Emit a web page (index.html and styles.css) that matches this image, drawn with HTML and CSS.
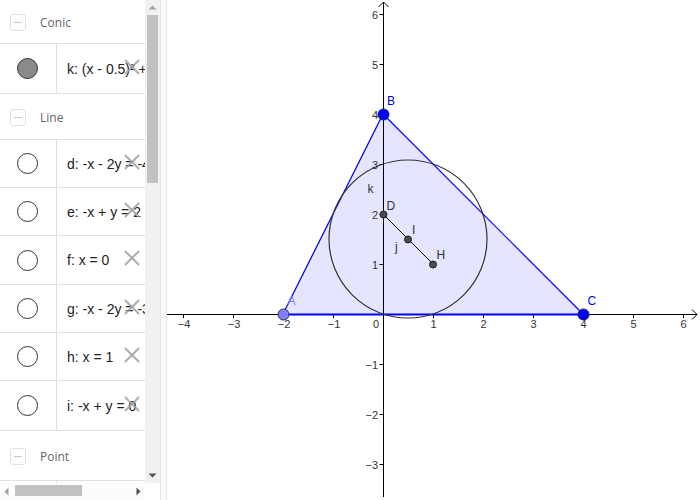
FILE: index.html
```html
<!DOCTYPE html>
<html>
<head>
<meta charset="utf-8">
<link rel="stylesheet" href="styles.css">
</head>
<body>
<div class="app">
  <div class="algebra">
    <div class="av-main">
      <div class="av-list">
        <div class="group h44"><span class="collapse"></span><span class="gname">Conic</span></div>
        <div class="item h50"><div class="marble-cell"><span class="marble filled"></span></div><div class="formula">k: (x - 0.5)² + (y - 1.5)² = 2.5</div><span class="del"></span></div>
        <div class="group h46"><span class="collapse"></span><span class="gname">Line</span></div>
        <div class="item h48"><div class="marble-cell"><span class="marble"></span></div><div class="formula">d: -x - 2y = -4</div><span class="del"></span></div>
        <div class="item h48"><div class="marble-cell"><span class="marble"></span></div><div class="formula">e: -x + y = 2</div><span class="del"></span></div>
        <div class="item h49"><div class="marble-cell"><span class="marble"></span></div><div class="formula">f: x = 0</div><span class="del"></span></div>
        <div class="item h48"><div class="marble-cell"><span class="marble"></span></div><div class="formula">g: -x - 2y = -3</div><span class="del"></span></div>
        <div class="item h48"><div class="marble-cell"><span class="marble"></span></div><div class="formula">h: x = 1</div><span class="del"></span></div>
        <div class="item h50"><div class="marble-cell"><span class="marble"></span></div><div class="formula">i: -x + y = 0</div><span class="del"></span></div>
        <div class="group h50"><span class="collapse"></span><span class="gname">Point</span></div>
        <div class="item h48"><div class="marble-cell"></div><div class="formula"></div></div>
      </div>
      <div class="vscroll">
        <div class="arrow-btn"><svg width="15" height="15" viewBox="0 0 15 15"><polygon points="3.5,9.5 11.5,9.5 7.5,5.5" fill="#a3a3a3"/></svg></div>
        <div class="vtrack"><div class="vthumb"></div></div>
        <div class="arrow-btn"><svg width="15" height="15" viewBox="0 0 15 15"><polygon points="3.5,5.5 11.5,5.5 7.5,9.5" fill="#505050"/></svg></div>
      </div>
    </div>
    <div class="hscroll-row">
      <div class="hscroll">
        <div class="harrow"><svg width="12" height="15" viewBox="0 0 12 15"><polygon points="8.5,3.5 8.5,11.5 4.5,7.5" fill="#a3a3a3"/></svg></div>
        <div class="htrack"><div class="hthumb"></div></div>
        <div class="harrow"><svg width="12" height="15" viewBox="0 0 12 15"><polygon points="3.5,3.5 3.5,11.5 7.5,7.5" fill="#505050"/></svg></div>
      </div>
      <div class="corner"></div>
    </div>
  </div>
  <div class="splitter"></div>
  <div class="graphics">
    <svg class="canvas" width="533" height="500" viewBox="167 0 533 500">
      <polygon points="283,314 383,114 583,314" fill="#e5e5ff"/>
      <line x1="167" y1="314.5" x2="697" y2="314.5" stroke="#000" stroke-width="1"/>
      <line x1="383.5" y1="2" x2="383.5" y2="497" stroke="#000" stroke-width="1"/>
      <polyline points="692,309.5 697,314.5 692,319.5" fill="none" stroke="#000" stroke-width="1"/>
      <polyline points="378.5,7 383.5,2 388.5,7" fill="none" stroke="#000" stroke-width="1"/>
      <g stroke="#000" stroke-width="1">
        <line x1="183.5" y1="314" x2="183.5" y2="318"/>
        <line x1="233.5" y1="314" x2="233.5" y2="318"/>
        <line x1="283.5" y1="314" x2="283.5" y2="318"/>
        <line x1="333.5" y1="314" x2="333.5" y2="318"/>
        <line x1="433.5" y1="314" x2="433.5" y2="318"/>
        <line x1="483.5" y1="314" x2="483.5" y2="318"/>
        <line x1="533.5" y1="314" x2="533.5" y2="318"/>
        <line x1="583.5" y1="314" x2="583.5" y2="318"/>
        <line x1="633.5" y1="314" x2="633.5" y2="318"/>
        <line x1="683.5" y1="314" x2="683.5" y2="318"/>
        <line x1="379.5" y1="14.5" x2="383" y2="14.5"/>
        <line x1="379.5" y1="64.5" x2="383" y2="64.5"/>
        <line x1="379.5" y1="114.5" x2="383" y2="114.5"/>
        <line x1="379.5" y1="164.5" x2="383" y2="164.5"/>
        <line x1="379.5" y1="214.5" x2="383" y2="214.5"/>
        <line x1="379.5" y1="264.5" x2="383" y2="264.5"/>
        <line x1="379.5" y1="364.5" x2="383" y2="364.5"/>
        <line x1="379.5" y1="414.5" x2="383" y2="414.5"/>
        <line x1="379.5" y1="464.5" x2="383" y2="464.5"/>
      </g>
      <g class="ticklbl" text-anchor="middle">
        <text x="184" y="328">−4</text>
        <text x="234" y="328">−3</text>
        <text x="284" y="328">−2</text>
        <text x="334" y="328">−1</text>
        <text x="433.5" y="328">1</text>
        <text x="483.5" y="328">2</text>
        <text x="533.5" y="328">3</text>
        <text x="583.5" y="328">4</text>
        <text x="633.5" y="328">5</text>
        <text x="683.5" y="328">6</text>
      </g>
      <g class="ticklbl" text-anchor="end">
        <text x="379" y="328">0</text>
        <text x="378" y="18.5">6</text>
        <text x="378" y="68.5">5</text>
        <text x="378" y="118.5">4</text>
        <text x="378" y="168.5">3</text>
        <text x="378" y="218.5">2</text>
        <text x="378" y="268.5">1</text>
        <text x="378" y="368.5">−1</text>
        <text x="378" y="418.5">−2</text>
        <text x="378" y="468.5">−3</text>
      </g>
      <line x1="283" y1="314" x2="383" y2="114" stroke="#0000ff" stroke-width="1.2"/>
      <line x1="383" y1="114" x2="583" y2="314" stroke="#0000ff" stroke-width="1.2"/>
      <line x1="283" y1="314.5" x2="583" y2="314.5" stroke="#0000ff" stroke-width="2"/>
      <circle cx="408" cy="239" r="79" fill="none" stroke="#333" stroke-width="1.2"/>
      <line x1="383" y1="214" x2="433" y2="264" stroke="#000" stroke-width="1"/>
      <circle cx="383.5" cy="214.5" r="3.5" fill="#4d4d4d" stroke="#222" stroke-width="1"/>
      <circle cx="408" cy="239.5" r="3.5" fill="#4d4d4d" stroke="#222" stroke-width="1"/>
      <circle cx="433" cy="264.5" r="3.5" fill="#4d4d4d" stroke="#222" stroke-width="1"/>
      <circle cx="283.5" cy="314.5" r="5.5" fill="#7f7fff" stroke="#333" stroke-width="1"/>
      <circle cx="383.5" cy="114.5" r="5.5" fill="#0000ff" stroke="#1a1a66" stroke-width="1"/>
      <circle cx="583.5" cy="314.5" r="5.5" fill="#0000ff" stroke="#1a1a66" stroke-width="1"/>
      <g class="ptlbl">
        <text x="287.5" y="305" fill="#8080ff">A</text>
        <text x="387" y="105" fill="#0000ff">B</text>
        <text x="587.5" y="305" fill="#0000ff">C</text>
        <text x="386.5" y="209.5" fill="#333">D</text>
        <text x="412" y="234" fill="#333">I</text>
        <text x="436.5" y="259" fill="#333">H</text>
        <text x="395" y="251" fill="#333">j</text>
        <text x="367.5" y="193" fill="#333">k</text>
      </g>
    </svg>
  </div>
</div>
</body>
</html>
```
FILE: styles.css
```css
html, body {
  margin: 0;
  padding: 0;
  background: #fff;
}
body {
  width: 700px;
  height: 500px;
  overflow: hidden;
  font-family: "Liberation Sans", Arial, sans-serif;
}
.app {
  display: flex;
  width: 700px;
  height: 500px;
}
.algebra {
  width: 160px;
  display: flex;
  flex-direction: column;
  flex: none;
}
.av-main {
  display: flex;
  height: 483px;
}
.av-list {
  width: 145px;
  overflow: hidden;
  display: flex;
  flex-direction: column;
  flex: none;
}
.group, .item {
  box-sizing: border-box;
  flex: none;
  display: flex;
  align-items: center;
  border-bottom: 1px solid #e0e0e0;
  width: 145px;
  position: relative;
}
.h44 { height: 44px; }
.h46 { height: 46px; }
.h48 { height: 48px; }
.h49 { height: 49px; }
.h50 { height: 50px; }
.group {
  padding-left: 10px;
  padding-top: 2px;
}
.collapse {
  box-sizing: border-box;
  width: 16px;
  height: 17px;
  border: 1px solid #e2e2e2;
  border-radius: 3px;
  display: flex;
  align-items: center;
  justify-content: center;
}
.collapse::after {
  content: "";
  width: 8px;
  height: 1px;
  background: #c8c8c8;
}
.gname {
  margin-left: 14px;
  font-family: "Open Sans", "Liberation Sans", sans-serif;
  font-size: 12px;
  color: #666;
}
.item {
  align-items: stretch;
}
.marble-cell {
  box-sizing: border-box;
  width: 57px;
  flex: none;
  border-right: 1px solid #e0e0e0;
  display: flex;
  align-items: center;
  justify-content: center;
}
.marble {
  box-sizing: border-box;
  width: 21px;
  height: 21px;
  border-radius: 50%;
  border: 1px solid #333;
  background: #fff;
  margin-right: 1px;
}
.marble.filled {
  background: #8a8a8a;
}
.formula {
  padding-left: 10px;
  display: flex;
  align-items: center;
  white-space: nowrap;
  font-size: 14px;
  color: #222;
  overflow: hidden;
  flex: 1;
}
.del {
  position: absolute;
  right: 5px;
  top: 50%;
  width: 16px;
  height: 16px;
  margin-top: -10px;
}
.del::before, .del::after {
  content: "";
  position: absolute;
  left: -2px;
  top: 7px;
  width: 20px;
  height: 2px;
  background: rgba(160, 160, 160, 0.85);
  transform: rotate(45deg);
}
.del::after {
  transform: rotate(-45deg);
}
.vscroll {
  width: 15px;
  flex: none;
  background: #f1f1f1;
  display: flex;
  flex-direction: column;
}
.arrow-btn {
  height: 15px;
  flex: none;
}
.arrow-btn svg { display: block; }
.vtrack {
  flex: 1;
  padding: 0 2px;
}
.vthumb {
  height: 168px;
  background: #c1c1c1;
}
.hscroll-row {
  display: flex;
  height: 17px;
}
.hscroll {
  width: 145px;
  display: flex;
  align-items: center;
  background: #fcfcfc;
}
.harrow {
  width: 12px;
  flex: none;
}
.harrow svg { display: block; }
.htrack {
  flex: 1;
  padding: 2px 0 4px 3px;
}
.hthumb {
  width: 67px;
  height: 11px;
  background: #c1c1c1;
}
.corner {
  width: 15px;
  background: #fff;
}
.splitter {
  box-sizing: border-box;
  width: 7px;
  flex: none;
  background: #f8f8f8;
  border-left: 1px solid #e4e4e4;
  border-right: 1px solid #e4e4e4;
}
.graphics {
  flex: 1;
  overflow: hidden;
}
.canvas {
  display: block;
}
.ticklbl {
  font-family: "Liberation Sans", Arial, sans-serif;
  font-size: 11px;
  fill: #333;
}
.ptlbl {
  font-family: "Liberation Sans", Arial, sans-serif;
  font-size: 12px;
}
```
